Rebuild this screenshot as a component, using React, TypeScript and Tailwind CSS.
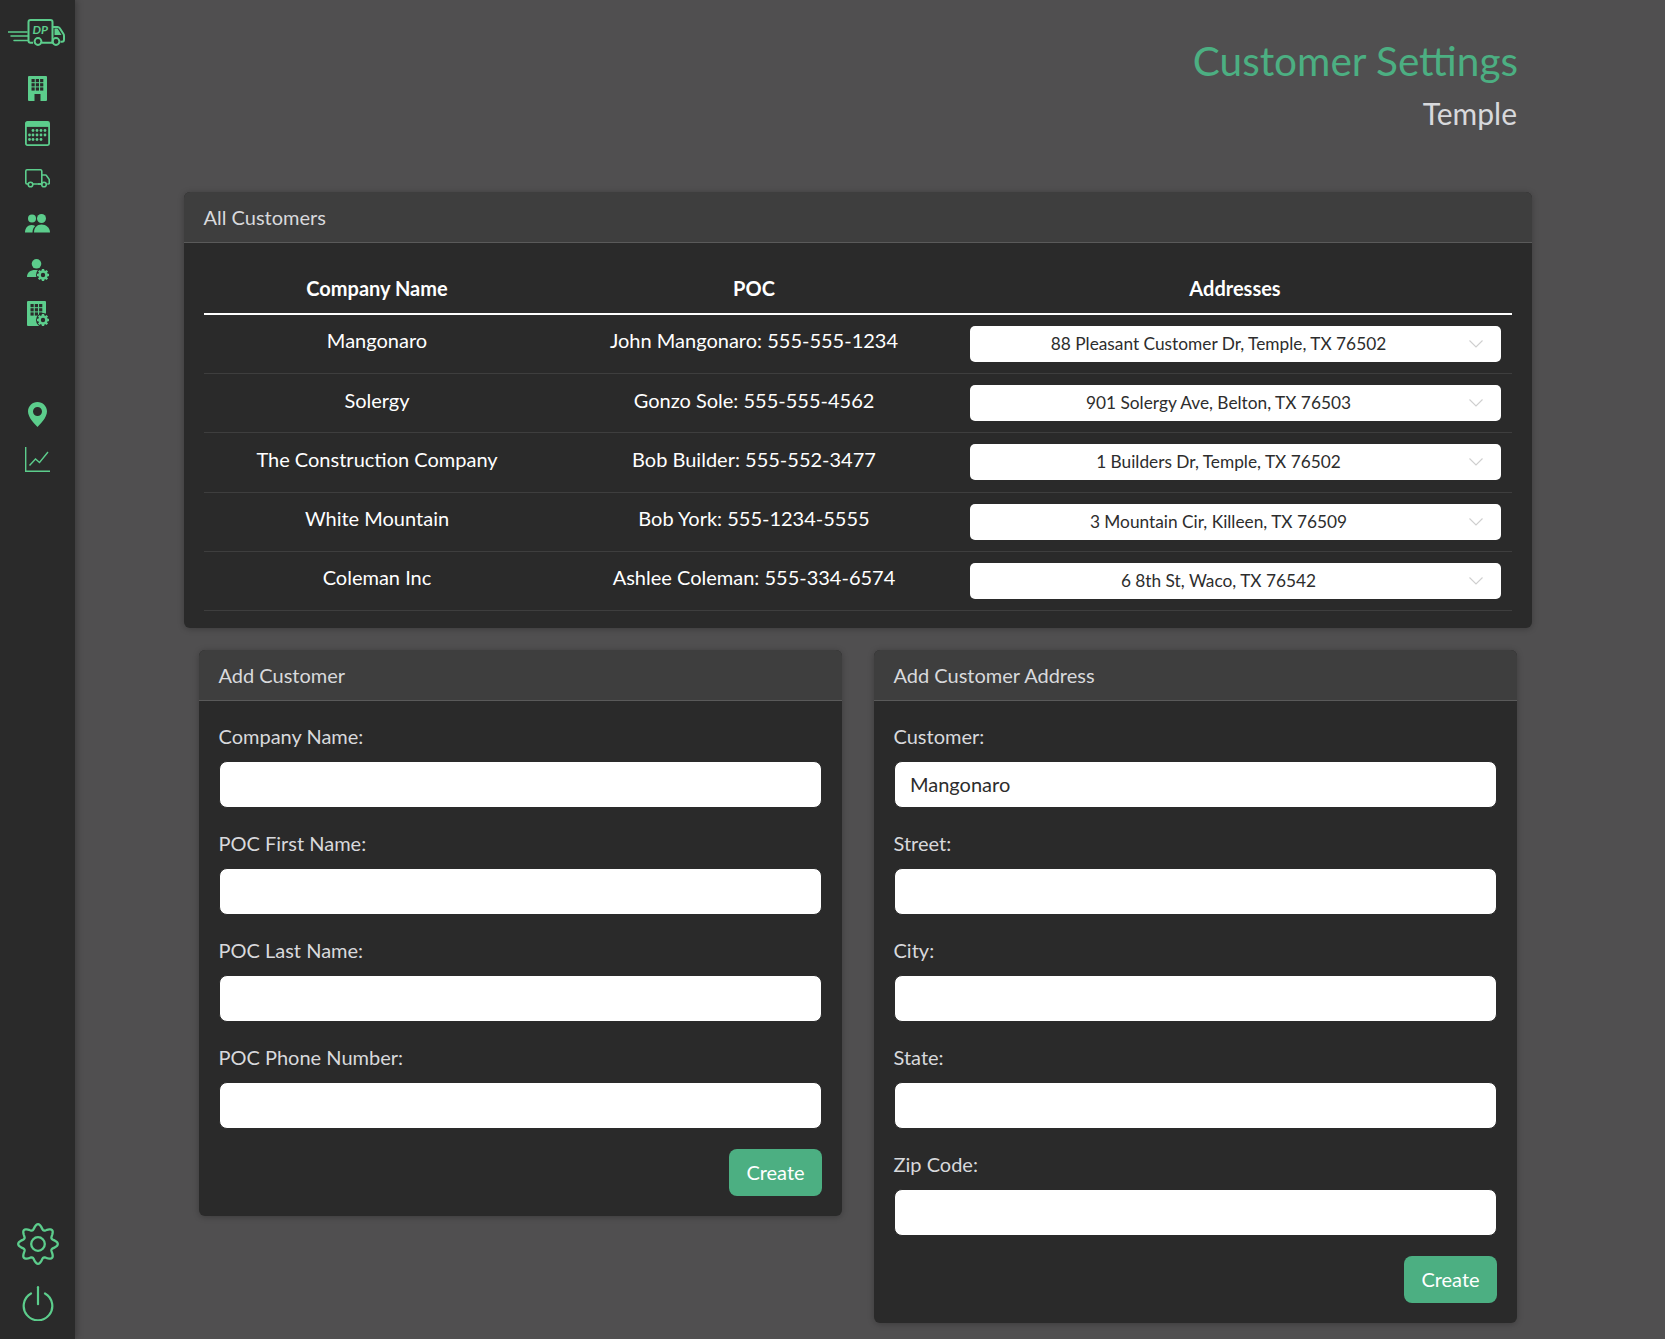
const GREEN = "#5ccd8c";
const DARK = "#2a2a2a";

// wavy outline of the settings gear, 8 round lobes
const gearPath =
  Array.from({ length: 145 }, (_, i) => {
    const t = (i / 144) * Math.PI * 2;
    const r = 17.2 + 2.6 * Math.cos(8 * t);
    const x = 21 + r * Math.sin(t);
    const y = 21 - r * Math.cos(t);
    return `${i === 0 ? "M" : "L"}${x.toFixed(2)} ${y.toFixed(2)}`;
  }).join(" ") + "z";

function Logo() {
  return (
    <svg width="58" height="28" viewBox="0 0 58 28" fill="none" stroke={GREEN} strokeWidth="1.500" className="block">
      <path d="M0 14h19M3 18h17M6 22.500h14" strokeLinecap="round" />
      <path d="M25 24.700h-2.500a2 2 0 0 1-2-2V4a2 2 0 0 1 2-2h20a2 2 0 0 1 2 2v20.700H34" strokeWidth="2" />
      <path d="M45 9h4.500c1 0 1.800.5 2.300 1.300l3.700 5.700c.4.600.5 1.200.5 1.900v3.800a2 2 0 0 1-2 2h-1.500" strokeWidth="2" />
      <path d="M46.500 10.500h3l4 6.500h-7z" fill={GREEN} stroke="none" />
      <circle cx="30" cy="23.500" r="3.400" strokeWidth="2" />
      <circle cx="48" cy="23.500" r="3.400" strokeWidth="2" />
      <text x="24.500" y="16" fill={GREEN} stroke="none" fontFamily="Lato" fontStyle="italic" fontWeight="700" fontSize="12">DP</text>
    </svg>
  );
}

function BuildingBody({ gear }: { gear?: boolean }) {
  const cols = [3.5, 7.8, 12.1];
  const rows = [3, 7.2, 11.4];
  return (
    <>
      <rect x="0" y="0" width="19" height="25" rx="1" fill={GREEN} />
      {rows.map((y) =>
        cols.map((x) => <rect key={`${x}-${y}`} x={x} y={y} width="3.200" height="3.200" fill={DARK} />)
      )}
      {!gear && <rect x="6.500" y="18" width="6" height="7" fill={DARK} />}
    </>
  );
}

function SmallGear({ x, y }: { x: number; y: number }) {
  return (
    <g transform={`translate(${x} ${y})`}>
      <circle r="7" fill={DARK} />
      <circle r="3.500" fill="none" stroke={GREEN} strokeWidth="2.600" />
      {[0, 45, 90, 135, 180, 225, 270, 315].map((a) => (
        <rect key={a} x="-1.200" y="-6" width="2.400" height="2.500" fill={GREEN} transform={`rotate(${a})`} />
      ))}
    </g>
  );
}

function SidebarIcons() {
  return (
    <>
      <svg width="19" height="25" viewBox="0 0 19 25" className="mt-[30px] block">
        <BuildingBody />
      </svg>
      <svg width="25" height="25" viewBox="0 0 25 25" className="mt-[20px] block">
        <rect x="0.900" y="0.900" width="23.200" height="23.200" rx="1.500" fill="none" stroke={GREEN} strokeWidth="1.800" />
        <rect x="0.900" y="0.900" width="23.200" height="5" fill={GREEN} />
        {[
          [8, 9.500], [12, 9.500], [16, 9.500], [20, 9.500],
          [4.500, 14], [8, 14], [12, 14], [16, 14], [20, 14],
          [4.500, 18.500], [8, 18.500], [12, 18.500], [16, 18.500],
        ].map(([x, y]) => (
          <circle key={`${x}-${y}`} cx={x} cy={y} r="1.400" fill={GREEN} />
        ))}
      </svg>
      <svg width="25" height="19" viewBox="0 0 25 19" fill="none" stroke={GREEN} strokeWidth="1.600" className="mt-[23px] block">
        <path d="M3 15H2a1.300 1.300 0 0 1-1.200-1.300V2A1.300 1.300 0 0 1 2 .8h13.500A1.300 1.300 0 0 1 16.800 2v13H8" />
        <path d="M16.800 6h3.500c.5 0 1 .2 1.300.7l2.400 3.400c.2.300.3.600.3 1V14a1 1 0 0 1-1 1h-1M13 15h4" />
        <circle cx="5.500" cy="15.500" r="2.300" />
        <circle cx="19" cy="15.500" r="2.300" />
      </svg>
      <svg width="25" height="19" viewBox="0 0 25 19" fill={GREEN} className="mt-[26px] block">
        <circle cx="7" cy="4.500" r="4" />
        <circle cx="16.500" cy="4.500" r="4.500" />
        <path d="M0 18.500c0-4.500 2.800-7.500 6.500-7.500 1.400 0 2.700.4 3.700 1.100-1.700 1.500-2.700 3.700-2.700 6.400z" />
        <path d="M9 18.500C9 13.500 12 10.500 16.500 10.500S25 13.500 25 18.500z" />
      </svg>
      <svg width="22" height="22" viewBox="0 0 22 22" fill={GREEN} className="mt-[26px] block">
        <circle cx="9.500" cy="4.800" r="4.800" />
        <path d="M0 18c0-4.500 3.500-7 8-7 2 0 3 .3 4 .8-1.500 1.500-2.200 3.600-1.500 6.200z" />
        <SmallGear x={16} y={16} />
      </svg>
      <svg width="22" height="25" viewBox="0 0 22 25" className="mt-[20px] block">
        <BuildingBody gear />
        <SmallGear x={16} y={19} />
      </svg>
      <svg width="19" height="25" viewBox="0 0 19 25" className="mt-[76px] block">
        <path fillRule="evenodd" fill={GREEN} d="M9.500 0C4.300 0 0 4.200 0 9.500 0 15.500 7 22.500 9.500 25 12 22.500 19 15.500 19 9.500 19 4.200 14.700 0 9.500 0zm0 5a4.500 4.500 0 1 1 0 9 4.500 4.500 0 0 1 0-9z" />
      </svg>
      <svg width="25" height="25" viewBox="0 0 25 25" fill="none" stroke={GREEN} strokeWidth="1.400" className="mt-[20px] block">
        <path d="M.7 0v24.300H25" />
        <path d="M4.500 18.500l6-6.500 4 3.500L23 5" />
      </svg>
    </>
  );
}

function BottomIcons() {
  return (
    <>
      <svg width="42" height="42" viewBox="0 0 42 42" fill="none" stroke={GREEN} strokeWidth="2.300" className="mt-auto block">
        <path d={gearPath} />
        <circle cx="21" cy="21" r="6.800" />
      </svg>
      <svg width="32" height="35" viewBox="0 0 32 35" fill="none" stroke={GREEN} strokeWidth="2.200" strokeLinecap="round" className="mt-[21px] mb-[18px] block">
        <path d="M16 1.200v17" />
        <path d="M9 7.500a14.300 14.300 0 1 0 14 0" />
      </svg>
    </>
  );
}

function Sidebar() {
  return (
    <aside className="flex w-[75px] shrink-0 flex-col items-center bg-[#2a2a2a] pt-[18px] shadow-[2px_0_6px_rgba(0,0,0,0.25)]">
      <div className="ml-[-2px]">
        <Logo />
      </div>
      <SidebarIcons />
      <BottomIcons />
    </aside>
  );
}

const customers = [
  { name: "Mangonaro", poc: "John Mangonaro: 555-555-1234", addr: "88 Pleasant Customer Dr, Temple, TX 76502" },
  { name: "Solergy", poc: "Gonzo Sole: 555-555-4562", addr: "901 Solergy Ave, Belton, TX 76503" },
  { name: "The Construction Company", poc: "Bob Builder: 555-552-3477", addr: "1 Builders Dr, Temple, TX 76502" },
  { name: "White Mountain", poc: "Bob York: 555-1234-5555", addr: "3 Mountain Cir, Killeen, TX 76509" },
  { name: "Coleman Inc", poc: "Ashlee Coleman: 555-334-6574", addr: "6 8th St, Waco, TX 76542" },
];

function CardHeader({ title }: { title: string }) {
  return (
    <div className="flex h-[51px] items-center rounded-t-[6px] border-b border-[#5a5a5a] bg-[#3e3e3e] px-[19.500px] text-[20px] text-[#d8d9dc]">
      {title}
    </div>
  );
}

function CustomersTable() {
  return (
    <section className="w-[1348px] rounded-[6px] bg-[#2a2a2a] shadow-[0_1px_6px_rgba(0,0,0,0.25)]">
      <CardHeader title="All Customers" />
      <div className="px-[20px] pb-[17px] pt-[22px] text-[20px] text-white">
        <div className="grid h-[50px] grid-cols-[346px_408px_554px] items-center border-b-2 border-white pb-[2px] text-center font-bold">
          <div>Company Name</div>
          <div>POC</div>
          <div>Addresses</div>
        </div>
        {customers.map((c) => (
          <div key={c.name} className="grid h-[59.200px] grid-cols-[346px_408px_554px] border-b border-[#3e3e3e] text-center">
            <div className="pt-[10.400px]">{c.name}</div>
            <div className="pt-[10.400px]">{c.poc}</div>
            <div className="pl-[12px] pr-[11px] pt-[11px]">
              <div className="relative flex h-[36px] items-center justify-center rounded-[5px] bg-white pr-[34px] text-[17.300px] text-[#2d2d2d]">
                {c.addr}
                <svg width="14" height="8" viewBox="0 0 14 8" fill="none" stroke="#cfcfcf" strokeWidth="1.100" className="absolute right-[18px] top-[14px]">
                  <path d="M.5.5L7 7l6.500-6.500" />
                </svg>
              </div>
            </div>
          </div>
        ))}
      </div>
    </section>
  );
}

function Field({ label, value }: { label: string; value?: string }) {
  return (
    <div>
      <label className="ml-[-0.500px] block h-[27px] text-[20px] leading-[27px] text-[#d8d9dc]">{label}</label>
      <input
        readOnly
        value={value ?? ""}
        className="mt-[11px] block h-[47px] w-full rounded-[8px] border border-[#2a2a2a] bg-white px-[15px] pb-[1px] text-[20px] text-[#2d2d2d] outline-none"
      />
    </div>
  );
}

function FormCard({ title, fields }: { title: string; fields: { label: string; value?: string }[] }) {
  return (
    <section className="w-[643px] self-start rounded-[6px] bg-[#2a2a2a] shadow-[0_1px_6px_rgba(0,0,0,0.25)]">
      <CardHeader title={title} />
      <div className="flex flex-col gap-[22px] px-[20px] pt-[22px]">
        {fields.map((f) => (
          <Field key={f.label} {...f} />
        ))}
      </div>
      <div className="flex justify-end px-[20px] pb-[20px] pt-[20px]">
        <button className="h-[47px] w-[93px] rounded-[8px] bg-[#4caf82] pb-[1px] text-[20px] text-white">Create</button>
      </div>
    </section>
  );
}

export default function App() {
  return (
    <div className="flex h-[1339px] overflow-hidden bg-[#504f50] font-['Lato',sans-serif]">
      <Sidebar />
      <main className="flex-1 pl-[109px]">
        <div className="w-[1334px] pt-[34px] text-right">
          <h1 className="text-[40.500px] leading-[54px] text-[#4caf82]">Customer Settings</h1>
          <h2 className="mr-[1px] mt-[2px] text-[30px] leading-[46px] text-[#d8d9dc]">Temple</h2>
        </div>
        <div className="mt-[56px]">
          <CustomersTable />
        </div>
        <div className="mt-[22px] flex gap-[32px] pl-[15px]">
          <FormCard
            title="Add Customer"
            fields={[
              { label: "Company Name:" },
              { label: "POC First Name:" },
              { label: "POC Last Name:" },
              { label: "POC Phone Number:" },
            ]}
          />
          <FormCard
            title="Add Customer Address"
            fields={[
              { label: "Customer:", value: "Mangonaro" },
              { label: "Street:" },
              { label: "City:" },
              { label: "State:" },
              { label: "Zip Code:" },
            ]}
          />
        </div>
      </main>
    </div>
  );
}
